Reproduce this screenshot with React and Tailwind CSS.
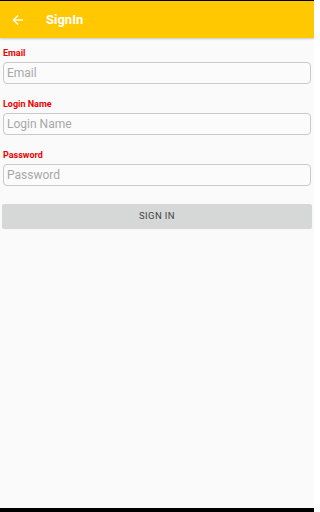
import React from "react";

function Field({ label, placeholder, type = "text" }) {
  return (
    <div className="flex flex-col">
      <label className="pl-[3px] text-[9px] font-bold leading-[12px] text-[#ee0000]">{label}</label>
      <input
        type={type}
        placeholder={placeholder}
        className="mx-[3px] mt-[3px] h-[22px] rounded-[4px] border border-[#c9c9c9] bg-[#fbfbfb] px-[3px] text-[12px] text-[#333] placeholder:text-[#a8a8a8] outline-none"
      />
    </div>
  );
}

export default function App() {
  return (
    <div className="relative flex h-[512px] w-[314px] flex-col overflow-hidden bg-[#fafafa]" style={{ fontFamily: "Roboto, 'Liberation Sans', sans-serif" }}>
      <div className="h-px bg-black" />
      <header className="flex h-[37px] items-center bg-[#ffc800] shadow-[0_1px_2px_rgba(0,0,0,0.2)]">
        <svg className="ml-[12px] h-[12px] w-[12px]" viewBox="0 0 24 24" fill="none" stroke="white" strokeWidth="2.6" strokeLinecap="square">
          <path d="M21 12H4" />
          <path d="M11 4l-8 8 8 8" />
        </svg>
        <h1 className="ml-[22px] text-[13px] font-bold text-white">SignIn</h1>
      </header>
      <div className="mt-[9px] flex flex-col gap-[14px]">
        <Field label="Email" placeholder="Email" />
        <Field label="Login Name" placeholder="Login Name" />
        <Field label="Password" placeholder="Password" type="password" />
      </div>
      <button className="mx-[2px] mt-[18px] h-[24px] rounded-[2px] bg-[#d6d7d7] text-[9.5px] font-normal tracking-[0.4px] text-[#444] shadow-[0_1px_1px_rgba(0,0,0,0.15)]">
        SIGN IN
      </button>
      <div className="flex-1" />
      <div className="h-[4px] bg-black" />
    </div>
  );
}
